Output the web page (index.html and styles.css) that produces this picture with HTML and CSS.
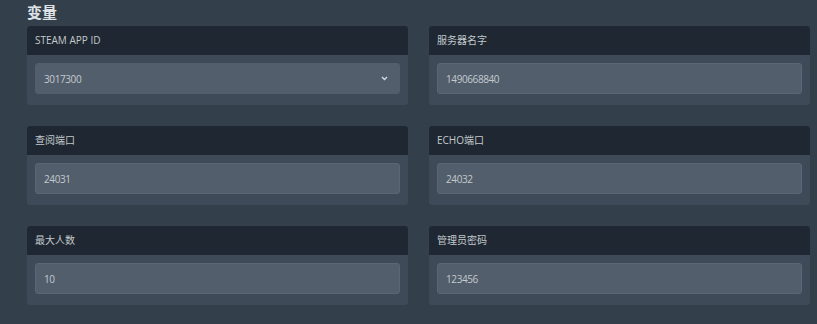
FILE: index.html
```html
<!DOCTYPE html>
<html lang="zh-CN">
<head>
	<meta charset="utf-8">
	<title>变量</title>
	<link rel="stylesheet" href="styles.css">
</head>
<body>
	<div class="section">
		<h2 class="section__title">变量</h2>
		<div class="vars">
			<!-- one variable box -->
			<div class="var">
				<div class="var__head">STEAM APP ID</div>
				<div class="var__body">
					<div class="var__field var__field--select">
						<span>3017300</span>
						<svg class="var__chevron" width="7" height="5" viewBox="0 0 7 5"><path d="M1 1l2.5 2.5L6 1" fill="none" stroke="#d6dbe0" stroke-width="1.4"/></svg>
					</div>
				</div>
			</div>
			<!-- END one variable box -->
			<div class="var">
				<div class="var__head">服务器名字</div>
				<div class="var__body">
					<div class="var__field">1490668840</div>
				</div>
			</div>
			<div class="var">
				<div class="var__head">查阅端口</div>
				<div class="var__body">
					<div class="var__field">24031</div>
				</div>
			</div>
			<div class="var">
				<div class="var__head">ECHO端口</div>
				<div class="var__body">
					<div class="var__field">24032</div>
				</div>
			</div>
			<div class="var">
				<div class="var__head">最大人数</div>
				<div class="var__body">
					<div class="var__field">10</div>
				</div>
			</div>
			<div class="var">
				<div class="var__head">管理员密码</div>
				<div class="var__body">
					<div class="var__field">123456</div>
				</div>
			</div>
		</div>
	</div>
</body>
</html>
```

FILE: styles.css
```css
html, body {
	margin: 0;
	height: 100%;
}
body {
	background: #343f4c;
	font-family: "Open Sans", "Noto Sans CJK SC", sans-serif;
	color: #c8cdd2;
	overflow: hidden;
}
.section {
	padding: 0 7px 0 27px;
}
.section__title {
	margin: 0;
	padding-top: 3px;
	height: 23px;
	font-size: 15px;
	line-height: 18px;
	font-weight: bold;
	color: #dfe3e7;
}

/* variable grid */
.vars {
	display: grid;
	grid-template-columns: 1fr 1fr;
	column-gap: 21px;
	row-gap: 21px;
}
.var {
	height: 79px;
	border-radius: 3px;
	background: #3e4a57;
	overflow: hidden;
}
.var__head {
	height: 29px;
	padding: 0 8px;
	background: #1f2832;
	font-size: 10px;
	line-height: 29px;
	color: #c3c8cd;
}
.var__body {
	padding: 8px;
}
.var__field {
	display: flex;
	align-items: center;
	justify-content: space-between;
	height: 29px;
	padding: 0 8px;
	border: 1px solid #5a6673;
	border-radius: 3px;
	background: #525e6b;
	font-size: 10px;
	letter-spacing: -0.4px;
	color: #c3c9cf;
}
.var__field--select {
	border-color: #525e6b;
	padding-right: 11px;
}
.var__chevron {
	display: block;
}
```
